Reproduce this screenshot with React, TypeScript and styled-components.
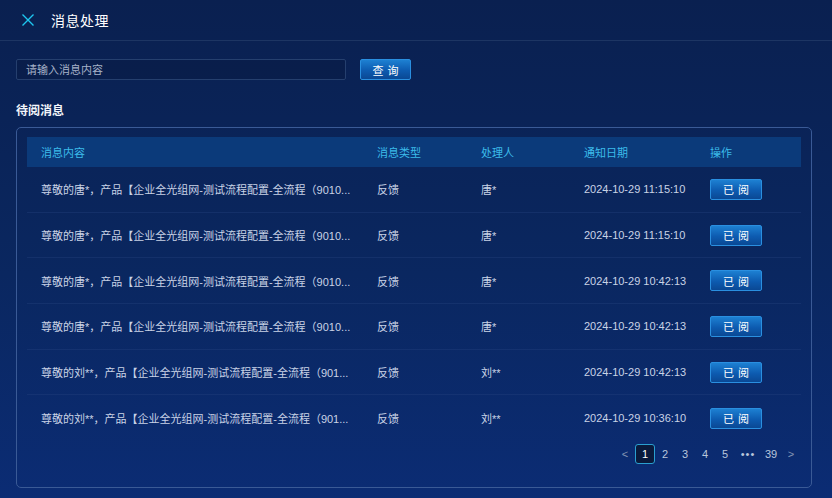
import styled, { createGlobalStyle } from 'styled-components';

const GlobalStyle = createGlobalStyle`
  html, body {
    margin: 0;
    padding: 0;
    background: #0a2152;
  }
  * {
    box-sizing: border-box;
  }
  body {
    font-family: "Liberation Sans", "Noto Sans CJK SC", sans-serif;
  }
`;

const Page = styled.div`
  width: 832px;
  height: 498px;
  overflow: hidden;
  background: linear-gradient(180deg, #0a2050 0%, #0a2760 55%, #0b2c74 100%);
  color: #c9d3e6;
`;

const TopBar = styled.div`
  height: 41px;
  display: flex;
  align-items: center;
  padding-left: 21px;
  gap: 16px;
  border-bottom: 1px solid #1d3563;
`;

const Title = styled.div`
  font-size: 14px;
  color: #ffffff;
  letter-spacing: 0.5px;
`;

const Body = styled.div`
  padding: 18px 20px 0 16px;
`;

const SearchRow = styled.div`
  display: flex;
  align-items: center;
  gap: 14px;
`;

const SearchInput = styled.input`
  width: 330px;
  height: 21px;
  background: rgba(8, 24, 60, 0.35);
  border: 1px solid #253f6e;
  border-radius: 2px;
  padding: 0 9px;
  font-size: 11px;
  font-family: inherit;
  color: #c9d3e6;
  outline: none;

  &::placeholder {
    color: #a6b2c8;
  }
`;

const BlueButton = styled.button<{ $w: number }>`
  width: ${(p) => p.$w}px;
  height: 21px;
  border: 1px solid #2a8fe0;
  border-radius: 2px;
  background: linear-gradient(180deg, #1d80d2 0%, #0d5bb0 55%, #0a4894 100%);
  color: #ffffff;
  font-size: 11px;
  font-family: inherit;
  letter-spacing: 4px;
  padding: 0 0 0 4px;
  cursor: pointer;
`;

const SectionTitle = styled.div`
  margin-top: 21px;
  font-size: 12px;
  font-weight: 600;
  color: #f2f5fa;
`;

const Panel = styled.div`
  margin-top: 9px;
  height: 361px;
  border: 1px solid #3a5a96;
  border-radius: 5px;
  padding: 9px 10px 0 10px;
`;

const Table = styled.div`
  display: flex;
  flex-direction: column;
`;

const Row = styled.div<{ $head?: boolean }>`
  display: grid;
  grid-template-columns: 336px 104px 103px 126px 1fr;
  align-items: center;
  height: ${(p) => (p.$head ? '30px' : '45.7px')};
  background: ${(p) => (p.$head ? '#0b3a7a' : 'transparent')};
  border-bottom: ${(p) => (p.$head ? 'none' : '1px solid rgba(40, 70, 130, 0.35)')};
  &:last-child {
    border-bottom: none;
  }
`;

const Cell = styled.div<{ $head?: boolean }>`
  padding-left: 14px;
  font-size: 11px;
  white-space: nowrap;
  overflow: hidden;
  color: ${(p) => (p.$head ? '#3cbcea' : '#c9d3e6')};
`;

const Pager = styled.div`
  display: flex;
  justify-content: flex-end;
  align-items: center;
  margin-top: 3px;
`;

const PageItem = styled.div<{ $active?: boolean; $wide?: boolean }>`
  min-width: ${(p) => (p.$wide ? 26 : 20)}px;
  height: 20px;
  display: flex;
  align-items: center;
  justify-content: center;
  font-size: 11px;
  color: ${(p) => (p.$active ? '#ffffff' : '#b9c6dc')};
  background: ${(p) => (p.$active ? '#0a1a3c' : 'transparent')};
  border: 1px solid ${(p) => (p.$active ? '#2a9fd0' : 'transparent')};
  border-radius: 3px;
  letter-spacing: ${(p) => (p.$wide ? '1px' : '0')};
`;

const Arrow = styled(PageItem)`
  color: #8495b4;
`;

const CloseIcon = () => (
  <svg width="14" height="14" viewBox="0 0 14 14">
    <path d="M1.5 1.5 L12.5 12.5 M12.5 1.5 L1.5 12.5" stroke="#1ec6f0" strokeWidth="1.4" fill="none" />
  </svg>
);

const rows = [
  { text: '尊敬的唐*，产品【企业全光组网-测试流程配置-全流程（9010...', user: '唐*', date: '2024-10-29 11:15:10' },
  { text: '尊敬的唐*，产品【企业全光组网-测试流程配置-全流程（9010...', user: '唐*', date: '2024-10-29 11:15:10' },
  { text: '尊敬的唐*，产品【企业全光组网-测试流程配置-全流程（9010...', user: '唐*', date: '2024-10-29 10:42:13' },
  { text: '尊敬的唐*，产品【企业全光组网-测试流程配置-全流程（9010...', user: '唐*', date: '2024-10-29 10:42:13' },
  { text: '尊敬的刘**，产品【企业全光组网-测试流程配置-全流程（901...', user: '刘**', date: '2024-10-29 10:42:13' },
  { text: '尊敬的刘**，产品【企业全光组网-测试流程配置-全流程（901...', user: '刘**', date: '2024-10-29 10:36:10' },
];

export default function App() {
  return (
    <>
      <GlobalStyle />
      <Page>
        <TopBar>
          <CloseIcon />
          <Title>消息处理</Title>
        </TopBar>
        <Body>
          <SearchRow>
            <SearchInput placeholder="请输入消息内容" />
            <BlueButton $w={51}>查询</BlueButton>
          </SearchRow>
          <SectionTitle>待阅消息</SectionTitle>
          <Panel>
            <Table>
              <Row $head>
                <Cell $head>消息内容</Cell>
                <Cell $head>消息类型</Cell>
                <Cell $head>处理人</Cell>
                <Cell $head>通知日期</Cell>
                <Cell $head>操作</Cell>
              </Row>
              {rows.map((r, i) => (
                <Row key={i}>
                  <Cell>{r.text}</Cell>
                  <Cell>反馈</Cell>
                  <Cell>{r.user}</Cell>
                  <Cell>{r.date}</Cell>
                  <Cell>
                    <BlueButton $w={52}>已阅</BlueButton>
                  </Cell>
                </Row>
              ))}
            </Table>
            <Pager>
              <Arrow>&lt;</Arrow>
              <PageItem $active>1</PageItem>
              <PageItem>2</PageItem>
              <PageItem>3</PageItem>
              <PageItem>4</PageItem>
              <PageItem>5</PageItem>
              <PageItem $wide>•••</PageItem>
              <PageItem>39</PageItem>
              <Arrow>&gt;</Arrow>
            </Pager>
          </Panel>
        </Body>
      </Page>
    </>
  );
}
